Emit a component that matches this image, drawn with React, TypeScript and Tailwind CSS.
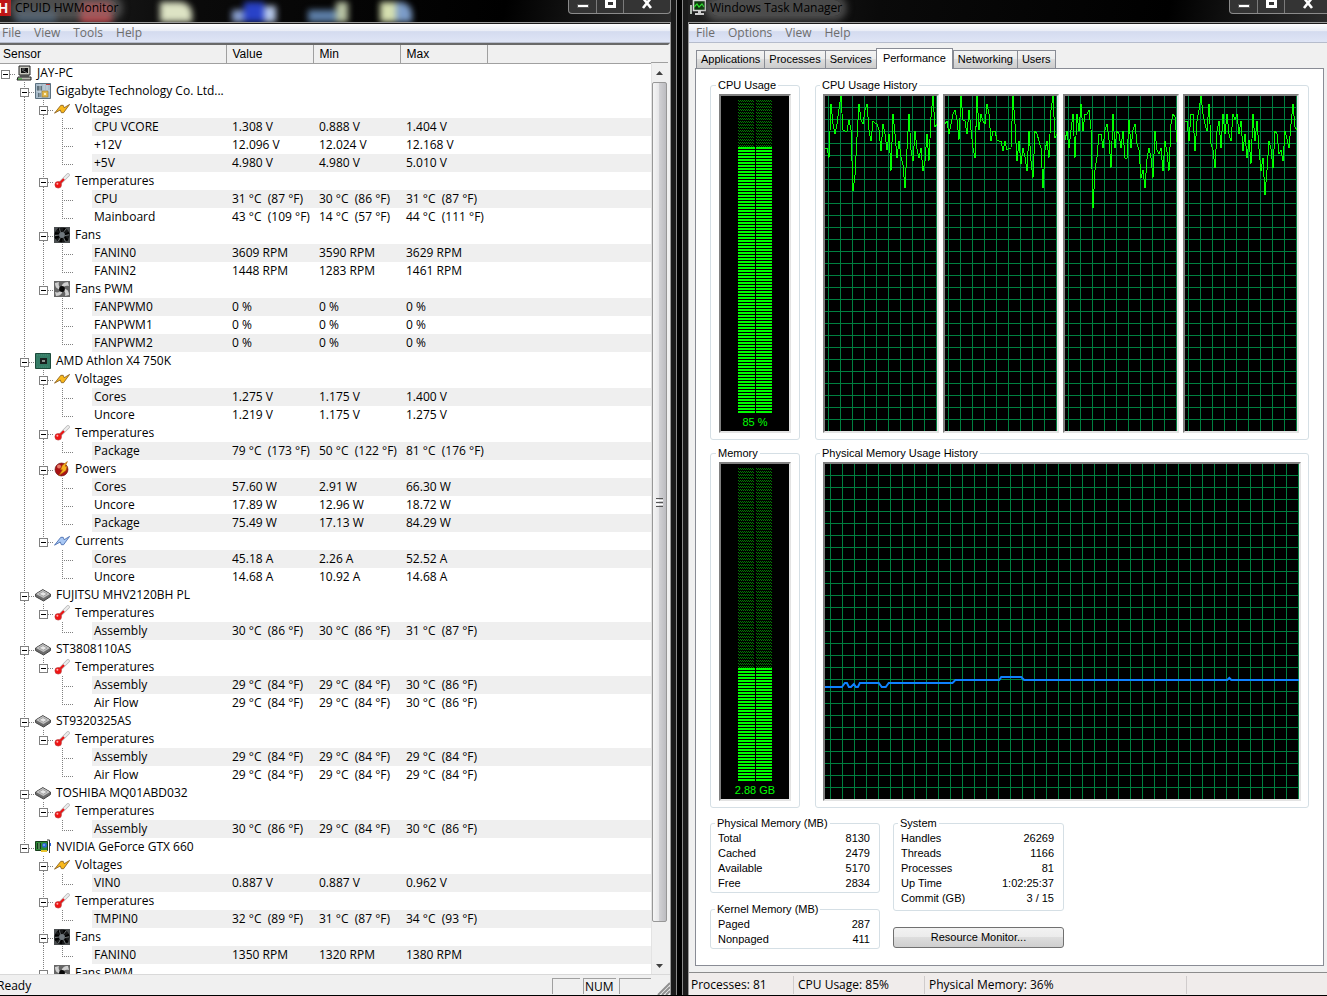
import React from 'react';

type IconName = 'pc' | 'board' | 'volt' | 'amp' | 'temp' | 'fan' | 'pwm' | 'cpu' | 'power' | 'disk' | 'gpu';

interface Group {
  name: string;
  icon: IconName;
  sensors: string[][];
}

interface Device {
  name: string;
  icon: IconName;
  groups: Group[];
}

const devices: Device[] = [
  {
    name: 'Gigabyte Technology Co. Ltd...',
    icon: 'board',
    groups: [
      {
        name: 'Voltages',
        icon: 'volt',
        sensors: [
          ['CPU VCORE', '1.308 V', '0.888 V', '1.404 V'],
          ['+12V', '12.096 V', '12.024 V', '12.168 V'],
          ['+5V', '4.980 V', '4.980 V', '5.010 V'],
        ],
      },
      {
        name: 'Temperatures',
        icon: 'temp',
        sensors: [
          ['CPU', '31 °C  (87 °F)', '30 °C  (86 °F)', '31 °C  (87 °F)'],
          ['Mainboard', '43 °C  (109 °F)', '14 °C  (57 °F)', '44 °C  (111 °F)'],
        ],
      },
      {
        name: 'Fans',
        icon: 'fan',
        sensors: [
          ['FANIN0', '3609 RPM', '3590 RPM', '3629 RPM'],
          ['FANIN2', '1448 RPM', '1283 RPM', '1461 RPM'],
        ],
      },
      {
        name: 'Fans PWM',
        icon: 'pwm',
        sensors: [
          ['FANPWM0', '0 %', '0 %', '0 %'],
          ['FANPWM1', '0 %', '0 %', '0 %'],
          ['FANPWM2', '0 %', '0 %', '0 %'],
        ],
      },
    ],
  },
  {
    name: 'AMD Athlon X4 750K',
    icon: 'cpu',
    groups: [
      {
        name: 'Voltages',
        icon: 'volt',
        sensors: [
          ['Cores', '1.275 V', '1.175 V', '1.400 V'],
          ['Uncore', '1.219 V', '1.175 V', '1.275 V'],
        ],
      },
      {
        name: 'Temperatures',
        icon: 'temp',
        sensors: [['Package', '79 °C  (173 °F)', '50 °C  (122 °F)', '81 °C  (176 °F)']],
      },
      {
        name: 'Powers',
        icon: 'power',
        sensors: [
          ['Cores', '57.60 W', '2.91 W', '66.30 W'],
          ['Uncore', '17.89 W', '12.96 W', '18.72 W'],
          ['Package', '75.49 W', '17.13 W', '84.29 W'],
        ],
      },
      {
        name: 'Currents',
        icon: 'amp',
        sensors: [
          ['Cores', '45.18 A', '2.26 A', '52.52 A'],
          ['Uncore', '14.68 A', '10.92 A', '14.68 A'],
        ],
      },
    ],
  },
  {
    name: 'FUJITSU MHV2120BH PL',
    icon: 'disk',
    groups: [
      {
        name: 'Temperatures',
        icon: 'temp',
        sensors: [['Assembly', '30 °C  (86 °F)', '30 °C  (86 °F)', '31 °C  (87 °F)']],
      },
    ],
  },
  {
    name: 'ST3808110AS',
    icon: 'disk',
    groups: [
      {
        name: 'Temperatures',
        icon: 'temp',
        sensors: [
          ['Assembly', '29 °C  (84 °F)', '29 °C  (84 °F)', '30 °C  (86 °F)'],
          ['Air Flow', '29 °C  (84 °F)', '29 °C  (84 °F)', '30 °C  (86 °F)'],
        ],
      },
    ],
  },
  {
    name: 'ST9320325AS',
    icon: 'disk',
    groups: [
      {
        name: 'Temperatures',
        icon: 'temp',
        sensors: [
          ['Assembly', '29 °C  (84 °F)', '29 °C  (84 °F)', '29 °C  (84 °F)'],
          ['Air Flow', '29 °C  (84 °F)', '29 °C  (84 °F)', '29 °C  (84 °F)'],
        ],
      },
    ],
  },
  {
    name: 'TOSHIBA MQ01ABD032',
    icon: 'disk',
    groups: [
      {
        name: 'Temperatures',
        icon: 'temp',
        sensors: [['Assembly', '30 °C  (86 °F)', '29 °C  (84 °F)', '30 °C  (86 °F)']],
      },
    ],
  },
  {
    name: 'NVIDIA GeForce GTX 660',
    icon: 'gpu',
    groups: [
      { name: 'Voltages', icon: 'volt', sensors: [['VIN0', '0.887 V', '0.887 V', '0.962 V']] },
      {
        name: 'Temperatures',
        icon: 'temp',
        sensors: [['TMPIN0', '32 °C  (89 °F)', '31 °C  (87 °F)', '34 °C  (93 °F)']],
      },
      { name: 'Fans', icon: 'fan', sensors: [['FANIN0', '1350 RPM', '1320 RPM', '1380 RPM']] },
      { name: 'Fans PWM', icon: 'pwm', sensors: [] },
    ],
  },
];

// One sample every two pixels, measured down from the top of the graph
const cpuHistory = [
  [52, 52, 62, 8, 28, 38, 28, 13, 0, 34, 35, 35, 24, 34, 95, 79, 41, 8, 24, 28, 14, 8, 34, 45, 25, 27, 28, 34, 55, 28, 38, 54, 38, 75, 18, 38, 62, 45, 61, 69, 92, 53, 18, 54, 65, 35, 53, 62, 52, 75, 65, 38, 65, 21, 0, 31, 28],
  [28, 25, 38, 28, 18, 14, 24, 44, 0, 24, 25, 38, 14, 34, 52, 62, 0, 34, 18, 25, 28, 8, 18, 45, 35, 35, 44, 45, 45, 55, 45, 54, 52, 52, 0, 28, 65, 45, 68, 52, 61, 75, 35, 65, 82, 35, 38, 45, 52, 92, 54, 45, 62, 14, 0, 42, 38],
  [44, 35, 52, 34, 18, 62, 18, 35, 8, 35, 18, 18, 14, 33, 112, 74, 61, 38, 38, 52, 34, 28, 44, 72, 18, 52, 35, 38, 52, 35, 62, 62, 24, 52, 34, 28, 48, 54, 82, 74, 92, 63, 52, 62, 82, 35, 54, 58, 52, 75, 45, 56, 75, 28, 18, 21, 46],
  [25, 25, 45, 18, 18, 55, 25, 14, 0, 18, 28, 35, 8, 48, 54, 72, 35, 25, 52, 18, 38, 18, 38, 45, 18, 24, 18, 38, 25, 55, 38, 62, 44, 68, 18, 45, 25, 53, 75, 62, 99, 74, 45, 53, 72, 35, 38, 58, 54, 65, 35, 43, 52, 28, 8, 31, 34],
];

const memoryLine =
  '0,223 17,223 20,219 22,219 24,223 26,223 29,220 31,223 33,223 35,219 54,219 57,223 61,223 64,219 128,219 131,216 175,216 177,213 197,213 200,216 404,216 406,214 408,216 476,216';

const Icon: React.FC<{ name: IconName }> = ({ name }) => (
  <svg viewBox="0 0 16 16" className="w-4 h-4 shrink-0" aria-hidden="true">
    {name === 'pc' && (
      <>
        <path d="M3 1h11v9H3z" fill="#c9c9c0" stroke="#222" />
        <path d="M5 3h7v5H5z" fill="#111" />
        <path d="M6 4h3M6 5l5 3" stroke="#777" />
        <path d="M2 12h13v3H1z" fill="#b9b9b0" stroke="#222" />
        <path d="M4 11h9" stroke="#111" />
        <path d="M2 14h4" stroke="#1d9a1d" />
      </>
    )}
    {name === 'board' && (
      <>
        <path d="M.5.5h15v15H.5z" fill="#a9bccb" stroke="#5b7180" />
        <path d="M2 3h5v5H2zM3 10h3v4H3z" fill="#60727d" />
        <path d="M5 1v14M9 1v6M12 1v6M1 8h14" stroke="#d3dce2" strokeWidth=".7" />
        <path d="M11 1h4v1h-4z" fill="#c43c3c" />
        <path d="M7 8h6v6H7z" fill="#e2b84c" stroke="#98762b" strokeWidth=".6" />
        <path d="M9 10h2v2H9z" fill="#fbf1bd" />
      </>
    )}
    {(name === 'volt' || name === 'amp') && (
      <path
        d="M.5 12.2 6.8 4.3h2.4l1 2.4 5.4-3.3-6 8.3H7.4L6.2 9z"
        fill={name === 'volt' ? '#f8b81c' : '#a9c8f4'}
        stroke={name === 'volt' ? '#80571a' : '#3c62a8'}
        strokeWidth=".8"
        strokeLinejoin="miter"
      />
    )}
    {name === 'temp' && (
      <>
        <path d="M6 10 14 2" stroke="#b5b5b5" strokeWidth="3.6" strokeLinecap="round" />
        <path d="m6 10 8-8" stroke="#ededed" strokeWidth="2.2" strokeLinecap="round" />
        <path d="m4 12 6-6" stroke="#e81010" strokeWidth="2.2" />
        <circle cx="4.2" cy="11.8" r="3.3" fill="#f01414" stroke="#b53a3a" strokeWidth=".6" />
        <circle cx="3.4" cy="10.8" r="1" fill="#ffb0b0" />
      </>
    )}
    {name === 'fan' && (
      <>
        <path d="M0 0h16v16H0z" fill="#4a4e50" />
        <circle cx="8" cy="8" r="7.6" fill="#17191a" />
        <path
          d="M7 5 4 1.6M10 5.4 10.6 1M11 8l4-2.4M10.4 10.4l3.4 3M7.4 11 7 15M5 9l-4 2M5 7 1 6"
          stroke="#000"
          strokeWidth="2.2"
        />
        <path
          d="M6.6 5.6 5.4 1.4M9.4 5.4 12 2M11 8.6l4-.8M9.6 10.6l1.8 4M6.4 10.6 4.4 14M5 8l-4 .6"
          stroke="#858b8e"
          strokeWidth=".8"
        />
        <circle cx="8" cy="8" r="2.9" fill="#6f777d" />
      </>
    )}
    {name === 'pwm' && (
      <>
        <path d="M0 0h16v16H0z" fill="#666" />
        <path
          d="M8 8C7 4 9 1 14 1l1 4c-3-1-5 0-7 3ZM8 8c4-1 7 1 7 6l-4 1c1-3 0-5-3-7ZM8 8c1 4-1 7-6 7l-1-4c3 1 5 0 7-3ZM8 8C4 9 1 7 1 2l4-1C4 4 5 6 8 8Z"
          fill="#d0d0d0"
        />
        <circle cx="8" cy="8" r="2.9" fill="#080808" />
      </>
    )}
    {name === 'cpu' && (
      <>
        <path d="M.5.5h15v15H.5z" fill="#357c66" stroke="#1c4a3b" />
        <path d="M2 2h12M2 14h12" stroke="#4b8e77" strokeDasharray="1 1" />
        <path d="M5 5h7v6H5z" fill="#1a1f1e" />
        <path d="M7 7h3v2H7z" fill="#8a9591" />
      </>
    )}
    {name === 'power' && (
      <>
        <circle cx="7.5" cy="8.5" r="6.5" fill="#a91313" stroke="#5d0808" strokeWidth=".6" />
        <circle cx="5" cy="5.6" r="2" fill="#e87a6a" />
        <path d="m13.4.6-5 3.6-2 4.6h2L5 14.6l7-5 1.2-4.4h-2z" fill="#f7b21e" stroke="#a75a08" strokeWidth=".6" />
      </>
    )}
    {name === 'disk' && (
      <>
        <path d="m.6 7 7.2-4.4L15.4 7v2.6L8.6 14 .6 9.6z" fill="#6e6e6e" stroke="#3f3f3f" strokeLinejoin="round" />
        <path d="m1 7 6.8-4L15 7l-6.6 4z" fill="#c4c4c4" />
        <path d="m4 7 4-2.4L12 7 8.4 9.2z" fill="#e6e6e6" stroke="#8f8f8f" strokeWidth=".7" />
      </>
    )}
    {name === 'gpu' && (
      <>
        <path d="M.5 2.5h12v9H.5z" fill="#2a8a34" stroke="#173d1b" />
        <path d="M2 4h4v6H2z" fill="#16351a" />
        <path d="M3 5h2M3 7h2M3 9h2" stroke="#8fd092" />
        <circle cx="9.5" cy="6.4" r="2.4" fill="#2a62d8" />
        <circle cx="9" cy="6" r=".8" fill="#b7d0ff" />
        <path d="M6 11h6v2H6z" fill="#e8c42c" />
        <path d="M12 1h2.5v13" fill="none" stroke="#3b3b3b" />
        <path d="M15 4h1v3h-1z" fill="#2a62d8" />
      </>
    )}
  </svg>
);

const dots = { stroke: '#808080', strokeDasharray: '1 1', shapeRendering: 'crispEdges' as const };

// Spacer column of the tree, with or without the line of an ancestor
const Trunk: React.FC<{ line: boolean }> = ({ line }) => (
  <svg width="19" height="18" className="shrink-0" aria-hidden="true">
    {line && <path d="M5.5 0v18" {...dots} />}
  </svg>
);

const Toggle: React.FC<{ label: string; top: boolean; bottom: boolean }> = ({ label, top, bottom }) => (
  <button type="button" aria-label={`Collapse ${label}`} className="shrink-0">
    <svg width="16" height="18" className="block">
      {top && <path d="M5.5 0v6" {...dots} />}
      {bottom && <path d="M5.5 15v3" {...dots} />}
      <path d="M10 10.5h6" {...dots} />
      <path d="M1.5 6.5h8v8h-8z" fill="#fff" stroke="#808080" shapeRendering="crispEdges" />
      <path d="M3 10.5h5" stroke="#000" shapeRendering="crispEdges" />
    </svg>
  </button>
);

const NodeRow: React.FC<{
  name: string;
  icon: IconName;
  trunks: boolean[];
  top: boolean;
  bottom: boolean;
}> = ({ name, icon, trunks, top, bottom }) => (
  <tr>
    <td colSpan={5} className="p-0">
      <div className="flex h-[18px] items-center">
        {trunks.map((line, i) => (
          <Trunk key={i} line={line} />
        ))}
        <Toggle label={name} top={top} bottom={bottom} />
        <Icon name={icon} />
        <span className="ml-[5px]">{name}</span>
      </div>
    </td>
  </tr>
);

const SensorRow: React.FC<{
  sensor: string[];
  shaded: boolean;
  last: boolean;
  trunks: boolean[];
}> = ({ sensor, shaded, last, trunks }) => {
  const bg = shaded ? 'bg-[#efefef]' : 'bg-white';
  return (
    <tr>
      <td className="p-0">
        <div className="flex h-[18px] items-center">
          {trunks.map((line, i) => (
            <Trunk key={i} line={line} />
          ))}
          <svg width="35" height="18" className="shrink-0" aria-hidden="true">
            <path d={last ? 'M5.5 0v10' : 'M5.5 0v18'} {...dots} />
            <path d="M5 10.5h11" {...dots} />
          </svg>
          <span className={`h-full grow pl-[2px] ${bg}`}>{sensor[0]}</span>
        </div>
      </td>
      {sensor.slice(1).map((value, i) => (
        <td key={i} className={`p-0 pl-[6px] whitespace-pre ${bg}`}>
          {value}
        </td>
      ))}
      <td className={`p-0 ${bg}`} />
    </tr>
  );
};

const TitleBar: React.FC<{
  title: string;
  icon: React.ReactNode;
  className?: string;
  controls?: string;
  children?: React.ReactNode;
}> = ({ title, icon, className = '', controls = '', children }) => (
  <header
    className={`relative flex h-[22px] shrink-0 overflow-hidden bg-[linear-gradient(100deg,#222,#0a0a0a_30%,#000_75%,#2c2c2c)] ${className}`}
  >
    {children}
    <div className="relative flex grow items-start">
      {icon}
      <h1 className="ml-1 rounded-full bg-[#707070]/60 text-[12px] leading-4 text-black shadow-[0_0_7px_5px_rgba(112,112,112,0.6)]">
        {title}
      </h1>
    </div>
    <div className={`relative flex h-[14px] rounded-b-[4px] border border-t-0 border-[#8b8b8b] bg-[#343434] ${controls}`}>
      <button type="button" aria-label="Minimize" className="flex w-7 justify-center border-r border-[#7b7b7b] pt-1">
        <span className="h-1 w-3 border border-[#555] bg-white" />
      </button>
      <button type="button" aria-label="Maximize" className="flex w-[27px] justify-center border-r border-[#7b7b7b]">
        <span className="h-2 w-[11px] border-[3px] border-t-2 border-white bg-[#333]" />
      </button>
      <button type="button" aria-label="Close" className="flex w-[46px] justify-center">
        <svg width="12" height="9">
          <path d="m2-2 8 10M10-2 2 8" stroke="#fff" strokeWidth="2.6" />
        </svg>
      </button>
    </div>
  </header>
);

const MenuBar: React.FC<{ items: string[]; className: string }> = ({ items, className }) => (
  <nav
    className={`flex h-[19px] shrink-0 items-center gap-[13px] border-b border-[#b6bccc] bg-[linear-gradient(#fff,#e8ecf6_40%,#d4dbef_42%,#dfe5f6)] text-[12px] text-[#6d6d6d] ${className}`}
  >
    {items.map((item) => (
      <button key={item} type="button">
        {item}
      </button>
    ))}
  </nav>
);

const ScrollBar = () => (
  <div className="flex w-[17px] shrink-0 flex-col">
    <div className="h-[18px] border-b border-[#a0a0a0] bg-[#f0f0f0]" />
    <div className="flex min-h-0 grow flex-col border-l border-[#e3e3e3] bg-[#f0f0f0] pr-px">
      <button type="button" aria-label="Scroll up" className="flex h-[19px] shrink-0 items-center justify-center">
        <svg width="7" height="4">
          <path d="M0 4 3.5 0 7 4z" fill="#404040" />
        </svg>
      </button>
      <div className="flex min-h-0 grow flex-col items-center justify-center gap-px rounded-[2px] border border-[#979797] bg-[linear-gradient(90deg,#f5f5f5,#e6e6e8_45%,#d0d0d3_50%,#bcbcc0)]">
        <span className="h-px w-[7px] bg-[#555]" />
        <span className="h-px w-[7px] bg-[#fff]" />
        <span className="h-px w-[7px] bg-[#555]" />
        <span className="h-px w-[7px] bg-[#fff]" />
        <span className="h-px w-[7px] bg-[#555]" />
      </div>
      <div className="h-9 shrink-0" />
      <button type="button" aria-label="Scroll down" className="flex h-4 shrink-0 items-center justify-center">
        <svg width="7" height="4">
          <path d="M0 0h7L3.5 4z" fill="#404040" />
        </svg>
      </button>
    </div>
  </div>
);

const HardwareMonitor = () => (
  <section className="flex min-w-0 flex-col overflow-hidden border-r border-[#8a8a8a] bg-[#1b1b1b] pr-[5px] font-['Open_Sans','Noto_Sans',sans-serif] text-[12px]">
    <TitleBar
      title="CPUID HWMonitor"
      icon={
        <span className="h-4 w-[11px] bg-[#c01414] font-['Liberation_Sans',sans-serif] text-[14px] leading-4 font-bold text-white">
          <span className="-ml-[2px]">H</span>
        </span>
      }
    >
      <div className="absolute inset-0 flex items-end blur-[3px]" aria-hidden="true">
        <span className="ml-4 h-3 w-10 bg-[#33506c]" />
        <span className="ml-6 h-5 w-8 rounded bg-[#e8353c]" />
        <span className="ml-12 h-5 w-8 rounded-tr-xl bg-[#dde3c4]" />
        <span className="ml-10 h-3 w-3 bg-[#8aa0d0]" />
        <span className="h-5 w-5 bg-[#2942c8]" />
        <span className="h-4 w-3 bg-[#b7c8ea]" />
        <span className="ml-8 h-3 w-7 bg-[#5d7fa8]" />
        <span className="h-5 w-3 bg-[#b9c4a4]" />
        <span className="ml-8 h-5 w-4 bg-[#d5dfb0]" />
        <span className="h-5 w-4 rounded-tr-xl bg-[#7c9cc8]" />
      </div>
    </TitleBar>
    <div className="flex min-h-0 grow flex-col border-t border-r border-[#9a9a9a] pt-px">
      <MenuBar items={['File', 'View', 'Tools', 'Help']} className="pl-[2px]" />
      <div className="flex min-h-0 grow border-t-2 border-r-2 border-t-[#696969] border-r-[#f0f0f0] bg-white">
        <div className="min-w-0 grow overflow-hidden">
          <table className="w-full table-fixed border-collapse leading-[18px]">
            <colgroup>
              <col className="w-[226px]" />
              <col className="w-[87px]" />
              <col className="w-[87px]" />
              <col className="w-[87px]" />
              <col />
            </colgroup>
            <thead>
              <tr className="h-[18px] bg-[#f0f0f0] text-left font-['Liberation_Sans',sans-serif] leading-[15px]">
                {['Sensor', 'Value', 'Min', 'Max'].map((label, i) => (
                  <th
                    key={label}
                    className={`border-r border-b border-[#a0a0a0] p-0 pt-[2px] font-normal ${i === 0 ? 'pl-[3px]' : 'pl-[6px]'}`}
                  >
                    {label}
                  </th>
                ))}
                <th className="border-b border-[#a0a0a0] p-0" />
              </tr>
            </thead>
            <tbody>
              <NodeRow name="JAY-PC" icon="pc" trunks={[]} top={false} bottom={false} />
              {devices.map((device, d) => {
                const moreDevices = d < devices.length - 1;
                return (
                  <React.Fragment key={device.name}>
                    <NodeRow name={device.name} icon={device.icon} trunks={[false]} top bottom={moreDevices} />
                    {device.groups.map((group, g) => {
                      const moreGroups = g < device.groups.length - 1;
                      return (
                        <React.Fragment key={group.name}>
                          <NodeRow
                            name={group.name}
                            icon={group.icon}
                            trunks={[false, moreDevices]}
                            top
                            bottom={moreGroups}
                          />
                          {group.sensors.map((sensor, s) => (
                            <SensorRow
                              key={sensor[0]}
                              sensor={sensor}
                              shaded={s % 2 === 0}
                              last={s === group.sensors.length - 1}
                              trunks={[false, moreDevices, moreGroups]}
                            />
                          ))}
                        </React.Fragment>
                      );
                    })}
                  </React.Fragment>
                );
              })}
            </tbody>
          </table>
        </div>
        <ScrollBar />
      </div>
      <footer className="flex h-[21px] shrink-0 items-center gap-[3px] border-t border-[#d9d9d9] bg-[#f0f0f0] pt-px">
        <span className="-ml-[3px] grow">Ready</span>
        <span className="h-4 w-[28px] border-t border-l border-[#a0a0a0]" />
        <span className="h-4 w-[33px] border-t border-l border-[#a0a0a0] pl-px leading-4">NUM</span>
        <span className="h-4 w-[32px] border-t border-l border-[#a0a0a0]" />
        <svg width="14" height="14" className="ml-[2px] self-end" aria-hidden="true">
          <path d="M2 14 14 2M6 14l8-8M10 14l4-4" stroke="#909090" strokeWidth="2" />
        </svg>
      </footer>
    </div>
  </section>
);

const Meter: React.FC<{ label: string; percent: number; id: string }> = ({ label, percent, id }) => (
  <div className="flex min-h-0 grow flex-col items-center border-2 border-t-[#808080] border-r-[#e3e3e3] border-b-[#e3e3e3] border-l-[#808080] bg-black pt-1 text-[#00ff00]">
    <div className="flex min-h-0 w-[34px] grow flex-col">
      <svg className="h-0 min-h-0 w-full grow" aria-hidden="true">
        <pattern id={`${id}-off`} width="2" height="3" patternUnits="userSpaceOnUse">
          <path d="M0 0h1v1H0zM1 1h1v1H1z" fill="#008000" shapeRendering="crispEdges" />
        </pattern>
        <rect width="16" height="100%" fill={`url(#${id}-off)`} />
        <rect x="18" width="16" height="100%" fill={`url(#${id}-off)`} />
      </svg>
      <div className="flex shrink-0 gap-px" style={{ height: `${percent}%` }}>
        <span className="grow bg-[repeating-linear-gradient(#00ff00_0_2px,#000_2px_3px)]" />
        <span className="grow bg-[repeating-linear-gradient(#00ff00_0_2px,#000_2px_3px)]" />
      </div>
    </div>
    <span className="h-[18px] shrink-0 leading-[18px]">{label}</span>
  </div>
);

const Graph: React.FC<{ id: string; offset: number; children: React.ReactNode }> = ({ id, offset, children }) => (
  <div className="min-h-0 min-w-0 flex-1 border-2 border-t-[#808080] border-r-[#e3e3e3] border-b-[#e3e3e3] border-l-[#808080] bg-black">
    <svg className="block h-full w-full" role="img" aria-label={id}>
      <pattern id={id} x={offset} y="11" width="12" height="12" patternUnits="userSpaceOnUse">
        <path d="M0 .5h12M.5 0v12" stroke="#008040" shapeRendering="crispEdges" />
      </pattern>
      <rect width="100%" height="100%" fill={`url(#${id})`} />
      {children}
    </svg>
  </div>
);

const Panel: React.FC<{ title: string; className?: string; children: React.ReactNode }> = ({
  title,
  className = '',
  children,
}) => (
  <fieldset className={`min-w-0 rounded-[3px] border border-[#d5dfe5] ${className}`}>
    <legend className="-ml-[3px] px-[2px] leading-[14px]">{title}</legend>
    {children}
  </fieldset>
);

const Stats: React.FC<{ rows: [string, string][] }> = ({ rows }) => (
  <table className="w-full leading-[15px]">
    <tbody>
      {rows.map(([label, value]) => (
        <tr key={label}>
          <th className="p-0 text-left font-normal">{label}</th>
          <td className="p-0 text-right">{value}</td>
        </tr>
      ))}
    </tbody>
  </table>
);

const tabs = ['Applications', 'Processes', 'Services', 'Performance', 'Networking', 'Users'];

const TaskManager = () => (
  <section className="flex min-w-0 flex-col overflow-hidden border-l border-[#8a8a8a] bg-[#1b1b1b] pl-[5px] font-['Open_Sans','Noto_Sans',sans-serif]">
    <TitleBar
      title="Windows Task Manager"
      className="pl-[2px]"
      controls="-mr-[5px]"
      icon={
        <svg width="16" height="16" viewBox="0 0 16 16" className="shrink-0" aria-hidden="true">
          <path d="M1 5v9" stroke="#b5c0b5" strokeWidth="2" />
          <path d="M3.5.5h12v10h-12z" fill="#0b3a0b" stroke="#d8d8d8" strokeWidth="1.6" />
          <path d="m4 7 3-3 2 3 3-3 2 3" fill="none" stroke="#2de02d" strokeWidth="1.2" />
          <path d="M8 11h3v2H8zM5 13h9v2H5z" fill="#d0d0d0" />
        </svg>
      }
    />
    <div className="flex min-h-0 grow flex-col border-t border-l border-[#9a9a9a] pt-px">
      <MenuBar items={['File', 'Options', 'View', 'Help']} className="pl-[7px]" />
      <main className="flex min-h-0 grow flex-col bg-[#f0f0f0] pt-[5px] pr-[3px] pb-[6px] pl-[6px] font-['Liberation_Sans',sans-serif] text-[11px]">
        <div role="tablist" className="flex h-5 shrink-0 items-end pl-px">
          {tabs.map((tab) => (
            <button
              key={tab}
              type="button"
              role="tab"
              aria-selected={tab === 'Performance'}
              className={
                tab === 'Performance'
                  ? 'relative z-10 -mb-px h-[21px] border border-b-0 border-[#898c95] bg-white px-[6px] pb-[2px]'
                  : 'h-[18px] border border-r-0 border-b-0 border-[#898c95] bg-[linear-gradient(#f3f3f3,#ebebeb_50%,#dddddd_50%,#cdcdcd)] px-1 last:border-r'
              }
            >
              {tab}
            </button>
          ))}
        </div>
        <div className="flex min-h-0 grow flex-col border border-[#898c95] bg-white px-[14px] pt-[9px] pb-4">
          <div className="flex min-h-0 flex-1 gap-[15px]">
            <Panel title="CPU Usage" className="flex w-[90px] shrink-0 flex-col px-2 pt-[2px] pb-[6px]">
              <Meter id="cpu" label="85 %" percent={85} />
            </Panel>
            <Panel title="CPU Usage History" className="flex grow gap-1 pt-[2px] pr-[9px] pb-[6px] pl-[7px]">
              {cpuHistory.map((samples, i) => (
                <Graph key={i} id={`core-${i}`} offset={3}>
                  <svg width="100%" height="336" viewBox="0 0 112 336" preserveAspectRatio="none">
                    <polyline
                      points={samples.map((y, n) => `${n * 2},${y}`).join(' ')}
                      fill="none"
                      stroke="#00ff00"
                      vectorEffect="non-scaling-stroke"
                      shapeRendering="crispEdges"
                    />
                  </svg>
                </Graph>
              ))}
            </Panel>
          </div>
          <div className="mt-[6px] flex min-h-0 flex-1 gap-[15px]">
            <Panel title="Memory" className="flex w-[90px] shrink-0 flex-col px-2 pt-[2px] pb-[6px]">
              <Meter id="mem" label="2.88 GB" percent={36} />
            </Panel>
            <Panel title="Physical Memory Usage History" className="flex grow px-[7px] pt-[2px] pb-[6px]">
              <Graph id="memory-history" offset={5}>
                <svg width="100%" height="336" viewBox="0 0 476 336" preserveAspectRatio="none">
                  <polyline
                    points={memoryLine}
                    fill="none"
                    stroke="#0f80ff"
                    strokeWidth="2"
                    vectorEffect="non-scaling-stroke"
                  />
                </svg>
              </Graph>
            </Panel>
          </div>
          <div className="mt-2 flex shrink-0 items-start gap-[13px]">
            <div className="flex w-[170px] flex-col gap-[9px]">
              <Panel title="Physical Memory (MB)" className="pt-px pr-[9px] pb-px pl-[7px]">
                <Stats
                  rows={[
                    ['Total', '8130'],
                    ['Cached', '2479'],
                    ['Available', '5170'],
                    ['Free', '2834'],
                  ]}
                />
              </Panel>
              <Panel title="Kernel Memory (MB)" className="pt-px pr-[9px] pb-px pl-[7px]">
                <Stats
                  rows={[
                    ['Paged', '287'],
                    ['Nonpaged', '411'],
                  ]}
                />
              </Panel>
            </div>
            <div className="flex w-[171px] flex-col gap-4">
              <Panel title="System" className="pt-px pr-[9px] pb-1 pl-[7px]">
                <Stats
                  rows={[
                    ['Handles', '26269'],
                    ['Threads', '1166'],
                    ['Processes', '81'],
                    ['Up Time', '1:02:25:37'],
                    ['Commit (GB)', '3 / 15'],
                  ]}
                />
              </Panel>
              <button
                type="button"
                className="h-[21px] rounded-[3px] border border-[#707070] bg-[linear-gradient(#f2f2f2,#ebebeb_50%,#dddddd_50%,#cfcfcf)]"
              >
                Resource Monitor...
              </button>
            </div>
          </div>
        </div>
      </main>
      <footer className="flex h-[23px] shrink-0 items-center border-t border-[#8c8c8c] bg-[#f0eceb] pt-px text-[12px]">
        <span className="w-[105px] border-r border-[#d0cccc] pl-[2px]">Processes: 81</span>
        <span className="w-[131px] border-r border-[#d0cccc] pl-1">CPU Usage: 85%</span>
        <span className="w-[262px] border-r border-[#d0cccc] pl-1">Physical Memory: 36%</span>
      </footer>
    </div>
  </section>
);

export default function App() {
  return (
    <div className="grid h-screen grid-cols-[677fr_645fr] grid-rows-[minmax(0,1fr)] gap-[5px] overflow-hidden bg-black pb-px text-black">
      <HardwareMonitor />
      <TaskManager />
    </div>
  );
}
